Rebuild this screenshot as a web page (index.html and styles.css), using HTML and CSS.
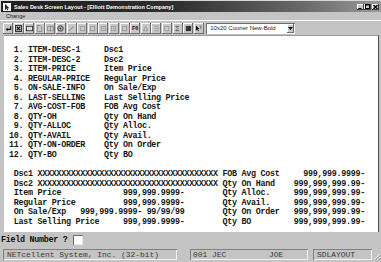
FILE: index.html
```html
<!DOCTYPE html>
<html>
<head>
<meta charset="utf-8">
<link rel="stylesheet" href="styles.css">
</head>
<body>
<div class="window">
  <div class="titlebar">
    <svg class="appicon" viewBox="0 0 8 8" width="8" height="8"><rect x="0.5" y="0.5" width="7" height="7" fill="#eee" stroke="#fff"/><path d="M2 1 L2 7 L3.5 5.5 L4.5 7.5 L5.3 7 L4.4 5.2 L6.3 5.2 Z" fill="#222"/></svg>
    <span class="title">Sales Desk Screen Layout - [Elliott Demonstration Company]</span>
    <div class="ctrls">
      <span class="cbtn"><svg viewBox="0 0 7 6" width="7" height="6"><rect x="1.5" y="4" width="3" height="1" fill="#000"/></svg></span>
      <span class="cbtn"><svg viewBox="0 0 7 6" width="7" height="6"><rect x="1.5" y="0.5" width="4" height="4" fill="none" stroke="#000"/><rect x="1.5" y="0.5" width="4" height="1" fill="#000"/></svg></span>
      <span class="cbtn gap"><svg viewBox="0 0 7 6" width="7" height="6"><path d="M1.5 1 L5.5 5 M5.5 1 L1.5 5" stroke="#000" stroke-width="1.2"/></svg></span>
    </div>
  </div>
  <div class="menubar"><span class="menu">Change</span></div>
  <div class="toolbar">
    <span class="tb"><svg viewBox="0 0 8 8"><path d="M6.5 1 V5 H2" fill="none" stroke="#111" stroke-width="1.2"/><path d="M0.8 5 L3 3 V7 Z" fill="#111"/></svg></span>
    <span class="tb"><svg viewBox="0 0 8 8"><rect x="0.5" y="0.5" width="7" height="7" fill="none" stroke="#222"/><path d="M2 2 L6 6 M6 2 L2 6" stroke="#111" stroke-width="1.3"/></svg></span>
    <span class="tb"><svg viewBox="0 0 8 8"><rect x="0.5" y="1.5" width="7" height="5" fill="#ddd" stroke="#333"/></svg></span>
    <span class="tb"><svg viewBox="0 0 8 8"><path d="M1.5 0.5 H5 L6.5 2 V7.5 H1.5 Z" fill="none" stroke="#8a8a8a"/></svg></span>
    <span class="tb"><svg viewBox="0 0 8 8"><path d="M0.5 1.5 H4 V6.5 H0.5 Z M3.5 1.5 H7.5 V6.5 H3.5" fill="none" stroke="#8a8a8a"/></svg></span>
    <span class="tb"><svg viewBox="0 0 8 8"><circle cx="4" cy="4" r="3" fill="none" stroke="#222"/><circle cx="4" cy="4" r="1.2" fill="#333"/></svg></span>
    <span class="tb"><svg viewBox="0 0 8 8"><path d="M1 7 L6.5 1.5" stroke="#999" stroke-width="1.2"/></svg></span>
    <span class="tb"><svg viewBox="0 0 8 8"><rect x="1.5" y="1.5" width="5" height="5" fill="none" stroke="#9a9a9a"/></svg></span>
    <span class="tb"><svg viewBox="0 0 8 8"><rect x="1.5" y="1.5" width="5" height="5" fill="none" stroke="#9a9a9a"/></svg></span>
    <span class="tb"><svg viewBox="0 0 8 8"><rect x="1.5" y="1.5" width="5" height="5" fill="none" stroke="#9a9a9a"/><path d="M3 4 H5" stroke="#9a9a9a"/></svg></span>
    <span class="tb"><svg viewBox="0 0 8 8"><rect x="1.5" y="1.5" width="5" height="5" fill="none" stroke="#9a9a9a"/><path d="M4 3 V5" stroke="#9a9a9a"/></svg></span>
    <span class="tb"><svg viewBox="0 0 8 8"><rect x="1.5" y="1.5" width="5" height="5" fill="none" stroke="#9a9a9a"/></svg></span>
    <span class="tb fkey">F6</span>
    <span class="tb"><svg viewBox="0 0 8 8"><path d="M1.5 6.5 L4 1.5 L6.5 6.5 Z" fill="none" stroke="#9a9a9a"/></svg></span>
    <span class="tb"><svg viewBox="0 0 8 8"><path d="M1.5 1.5 H6.5 M1.5 4 H6.5 M1.5 6.5 H6.5" stroke="#9a9a9a"/></svg></span>
    <span class="tb"><svg viewBox="0 0 8 8"><rect x="1.5" y="1.5" width="5" height="5" fill="none" stroke="#9a9a9a"/></svg></span>
    <span class="tb"><svg viewBox="0 0 8 8"><path d="M6 1.5 H2 L4.5 4 L2 6.5 H6" fill="none" stroke="#555"/></svg></span>
    <span class="tb"><svg viewBox="0 0 8 8"><rect x="1" y="1" width="6" height="6" fill="#333"/></svg></span>
    <span class="tb"><svg viewBox="0 0 8 8"><path d="M1 0.5 V6.5 L2.5 5 L3.6 7.2 L4.5 6.7 L3.5 4.7 H5.3 Z" fill="#111"/><path d="M5.3 1.2 Q7.3 1 7 2.6 Q6.8 3.3 6.2 3.6 V4.3" fill="none" stroke="#333" stroke-width="0.8"/></svg></span>
    <div class="combo"><span class="combo-text">10x20 Courier New-Bold</span><span class="combo-btn"><svg viewBox="0 0 5 3" width="5" height="3"><path d="M0 0 H5 L2.5 3 Z" fill="#111"/></svg></span></div>
  </div>
  <div class="client">
<pre class="screen">
 1. ITEM-DESC-1     Dsc1
 2. ITEM-DESC-2     Dsc2
 3. ITEM-PRICE      Item Price
 4. REGULAR-PRICE   Regular Price
 5. ON-SALE-INFO    On Sale/Exp
 6. LAST-SELLING    Last Selling Price
 7. AVG-COST-FOB    FOB Avg Cost
 8. QTY-OH          Qty On Hand
 9. QTY-ALLOC       Qty Alloc.
10. QTY-AVAIL       Qty Avail.
11. QTY-ON-ORDER    Qty On Order
12. QTY-BO          Qty BO

 Dsc1 XXXXXXXXXXXXXXXXXXXXXXXXXXXXXXXXXXXXXX FOB Avg Cost     999,999.9999-
 Dsc2 XXXXXXXXXXXXXXXXXXXXXXXXXXXXXXXXXXXXXX Qty On Hand    999,999,999.99-
 Item Price             999,999.9999-        Qty Alloc.     999,999,999.99-
 Regular Price          999,999.9999-        Qty Avail.     999,999,999.99-
 On Sale/Exp   999,999.9999- 99/99/99        Qty On Order   999,999,999.99-
 Last Selling Price     999,999.9999-        Qty BO         999,999,999.99-</pre>
  </div>
  <div class="prompt"><span class="prompt-label">Field Number ?</span><span class="prompt-input"></span></div>
  <div class="status">
    <span class="panel p1">NETcellent System, Inc. (32-bit)</span>
    <span class="panel p2">001 JEC         JOE</span>
    <span class="panel p3">SDLAYOUT</span>
    <svg class="grip" viewBox="0 0 8 8" width="8" height="8"><path d="M7 1 L1 7 M7 4 L4 7" stroke="#fff"/><path d="M7.5 2 L2 7.5 M7.5 5 L5 7.5" stroke="#808080"/></svg>
  </div>
</div>
</body>
</html>
```

FILE: styles.css
```css
* { box-sizing: border-box; }
html, body { margin: 0; padding: 0; }
body {
  width: 381px;
  height: 262px;
  background: #c4c4c4;
  overflow: hidden;
  font-family: "Liberation Sans", Arial, sans-serif;
}
.window {
  width: 381px;
  height: 262px;
  display: flex;
  flex-direction: column;
}
.titlebar {
  height: 12px;
  display: flex;
  align-items: center;
  padding: 0 2px 0 2px;
  background: linear-gradient(to right, #1e1e1e 0%, #2e2e2e 45%, #6a6a6a 80%, #9a9a9a 100%);
  border-top: 1px solid #d8d8d8;
  border-left: 1px solid #d8d8d8;
}
.appicon { flex: none; }
.title {
  margin-left: 3px;
  color: #fff;
  font-weight: bold;
  font-size: 5.5px;
  white-space: nowrap;
}
.ctrls {
  margin-left: auto;
  display: flex;
}
.cbtn {
  width: 7px;
  height: 6px;
  background: #c8c8c8;
  box-shadow: inset -1px -1px #404040, inset 1px 1px #fff;
  display: flex;
}
.cbtn.gap { margin-left: 1px; }
.cbtn svg { display: block; }
.menubar {
  height: 8px;
  display: flex;
  align-items: center;
  padding-left: 6px;
}
.menu {
  font-size: 5.5px;
  color: #222;
}
.toolbar {
  height: 15px;
  display: flex;
  align-items: center;
  padding-left: 3px;
  gap: 0.6px;
  border-top: 1px solid #fff;
}
.tb {
  flex: none;
  width: 10px;
  height: 11px;
  background: #c8c8c8;
  box-shadow: inset -1px -1px #6e6e6e, inset 1px 1px #fafafa;
  display: flex;
  align-items: center;
  justify-content: center;
}
.tb svg { width: 7px; height: 7px; display: block; }
.fkey {
  font-weight: bold;
  font-size: 5.5px;
  color: #111;
}
.combo {
  margin-left: 2px;
  width: 89px;
  height: 11px;
  background: #fff;
  box-shadow: inset 1px 1px #6e6e6e, inset -1px -1px #fafafa;
  display: flex;
  align-items: center;
  padding: 0 1px 0 4px;
}
.combo-text {
  font-size: 6px;
  color: #222;
  white-space: nowrap;
}
.combo-btn {
  margin-left: auto;
  width: 7px;
  height: 9px;
  background: #c8c8c8;
  box-shadow: inset -1px -1px #6e6e6e, inset 1px 1px #fafafa;
  display: flex;
  align-items: center;
  justify-content: center;
}
.client {
  height: 197px;
  margin: 0 2px 0 4px;
  background: #fff;
  border-top: 1px solid #9a9a9a;
  border-right: 1px solid #505050;
}
.screen {
  margin: 0;
  padding: 10px 0 0 5px;
  font-family: "Liberation Mono", "Courier New", monospace;
  font-weight: bold;
  font-size: 8.4px;
  letter-spacing: -0.28px;
  line-height: 9.55px;
  color: #161616;
}
.prompt {
  height: 15px;
  display: flex;
  align-items: center;
  padding-left: 1px;
}
.prompt-label {
  font-family: "Liberation Mono", "Courier New", monospace;
  font-weight: bold;
  font-size: 8.4px;
  letter-spacing: -0.28px;
  color: #111;
  white-space: pre;
}
.prompt-input {
  margin-left: 6px;
  width: 10px;
  height: 10px;
  background: #fff;
  box-shadow: inset 1px 1px #6e6e6e, inset -1px -1px #e8e8e8;
}
.status {
  height: 15px;
  display: flex;
  align-items: center;
  padding: 0 0 1px 3px;
}
.panel {
  height: 11px;
  display: flex;
  align-items: center;
  padding-left: 4px;
  box-shadow: inset 1px 1px #808080, inset -1px -1px #f4f4f4;
  font-family: "Liberation Mono", "Courier New", monospace;
  font-size: 7.93px;
  color: #3a3a3a;
  white-space: pre;
}
.p1 { width: 174px; }
.p2 { width: 118px; margin-left: 13px; padding-left: 3px; }
.p3 { width: 59px; margin-left: 5px; }
.grip { margin-left: 1px; align-self: flex-end; }
```
